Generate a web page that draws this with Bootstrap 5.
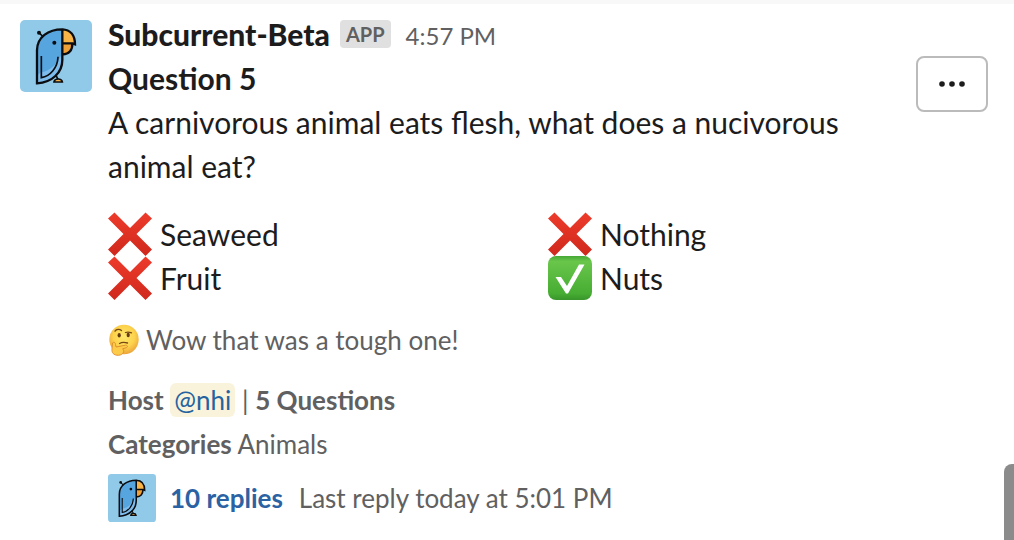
<!DOCTYPE html>
<html lang="en">
<head>
<meta charset="utf-8">
<meta name="viewport" content="width=device-width, initial-scale=1">
<title>Subcurrent-Beta</title>
<link href="https://cdn.jsdelivr.net/npm/bootstrap@5.3.0/dist/css/bootstrap.min.css" rel="stylesheet">
<style>
body { font-family: Lato, "Liberation Sans", sans-serif; font-size: 30px; line-height: 44px; color: #1d1c1d; background: #fff; overflow: hidden; }
.divider-strip { height: 4px; background: #f8f8f8; }
.message { padding: 8px 26px 16px 20px; }
.avatar { width: 72px; height: 72px; margin-top: 8px; }
.sender { font-weight: 900; }
.app-tag { font-size: 20px; line-height: 28px; font-weight: 700; color: #616061; background: #e0e0e0; border-radius: 4px; padding: 0 6px; margin: 0 15px 0 10px; }
.time { font-size: 24px; line-height: 40px; padding-top: 4px; }
.muted { color: #616061; }
.more { width: 72px; height: 56px; border: 2px solid #bbb; border-radius: 8px; background: #fff; }
.question-text { max-width: 760px; }
.emoji { width: 44px; height: 44px; }
.context { font-size: 26px; line-height: 36px; }
.reaction { margin-top: 22px; gap: 6px; }
.face { width: 32px; height: 32px; }
.mention { color: #2562a0; background: #faf3dc; border-radius: 6px; padding: 1px 4px; text-decoration: none; }
.thread { margin-top: 12px; }
.thread-avatar { width: 48px; height: 48px; margin-right: 14px; }
.replies { color: #2b62a3; font-weight: 700; text-decoration: none; }
.scroll-thumb { top: 464px; bottom: 0; width: 10px; background: #8b8b8b; border-radius: 8px 0 0 0; }
</style>
<script src="https://cdn.jsdelivr.net/npm/bootstrap@5.3.0/dist/js/bootstrap.bundle.min.js"></script>
</head>
<body>
<svg width="0" height="0" class="position-absolute" aria-hidden="true">
  <defs>
    <linearGradient id="red" x1="0" y1="0" x2="0" y2="1"><stop offset="0" stop-color="#ed3b2b"/><stop offset="1" stop-color="#cf281c"/></linearGradient>
    <linearGradient id="green" x1="0" y1="0" x2="0" y2="1"><stop offset="0" stop-color="#46a735"/><stop offset=".12" stop-color="#69c64b"/><stop offset=".85" stop-color="#47ad33"/><stop offset="1" stop-color="#38952a"/></linearGradient>
    <radialGradient id="skin" cx=".5" cy=".4" r=".6"><stop offset="0" stop-color="#ffe76a"/><stop offset=".6" stop-color="#fdd34c"/><stop offset="1" stop-color="#eca33b"/></radialGradient>
    <symbol id="bird" viewBox="0 0 216 216">
      <rect width="216" height="216" rx="15" fill="#91cae9"/>
      <path d="M57 38L70 51" stroke="#0b0d10" stroke-width="5"/>
      <circle cx="57" cy="38" r="6" fill="#0b0d10"/>
      <path d="M51 190V91C51 52 85 28 127 28V119C127 158 97 187 51 190Z" fill="#7dbcec"/>
      <path d="M51 166V91C51 52 85 28 127 28V96C116 132 88 154 63 157Z" fill="#56a5df"/>
      <path d="M127 28C151 29 165 45 165 73L158 70H127Z" fill="#f9b448"/>
      <path d="M127 70H157C158 91 146 104 127 103Z" fill="#efa036"/>
      <path d="M51 190V91C51 52 85 28 127 28V119C127 158 97 187 51 190ZM127 28C151 29 165 45 165 73L158 70H127M157 70C158 91 146 104 127 103" fill="none" stroke="#0b0d10" stroke-width="7"/>
      <path d="M64 108V173C91 168 113 143 114 110" fill="none" stroke="#0b0d10" stroke-width="5"/>
      <circle cx="103" cy="68" r="6" fill="#0b0d10"/>
      <path d="M107 164L114 178" stroke="#0b0d10" stroke-width="5"/>
      <path d="M102 186C104 174 125 174 127 186Z" fill="#f9b448" stroke="#0b0d10" stroke-width="5"/>
    </symbol>
    <symbol id="cross" viewBox="0 0 44 44"><path d="M0 6.500L6.500 .5L22 16L37.500 .5L44 6.500L28.500 22L44 37.500L37.500 44L22 28.500L6.500 44L0 37.500L15.500 22Z" fill="url(#red)"/></symbol>
    <symbol id="check" viewBox="0 0 44 44"><rect width="44" height="44" rx="8" fill="url(#green)"/><path d="M7.500 21H13L19 30L31 8.500H36.500L20 37.500H18Z" fill="#fff"/></symbol>
    <symbol id="think" viewBox="0 0 32 32">
      <circle cx="16" cy="15.500" r="14.700" fill="url(#skin)"/>
      <ellipse cx="11.200" cy="11.200" rx="1.600" ry="2.300" fill="#673b13"/><ellipse cx="20.200" cy="11" rx="1.600" ry="2.300" fill="#673b13"/>
      <path d="M7 7.200C8.500 5 11.500 5 13.500 6.500M17.500 8.500C19.500 7.800 21.500 8 23.500 8.800M11.500 19.500C14 18 17 18.300 19.500 19" fill="none" stroke="#754816" stroke-width="1.300" stroke-linecap="round"/>
      <path d="M4.500 19C6 17.500 7.500 18.500 7.500 20.500L8 23L17.500 21.200C20 21 20 23.300 18 23.800L14.500 24.800C17 26.500 15.500 31 10.500 31.300C5.500 31.500 3.500 28.500 4 25Z" fill="#fccb49" stroke="#dc8b2b" stroke-width=".9"/>
    </symbol>
  </defs>
</svg>
<div class="divider-strip"></div>
<main class="message d-flex gap-3">
  <svg class="avatar flex-shrink-0" role="img" aria-label="Subcurrent-Beta"><use href="#bird"/></svg>
  <article class="flex-grow-1">
    <header class="d-flex align-items-center">
      <span class="sender">Subcurrent-Beta</span><span class="app-tag">APP</span><time class="time muted">4:57 PM</time>
    </header>
    <section class="d-flex justify-content-between align-items-start">
      <div class="question-text"><strong>Question 5</strong><br>A carnivorous animal eats flesh, what does a nucivorous animal eat?</div>
      <button type="button" class="more d-flex align-items-center justify-content-center flex-shrink-0 p-0" aria-label="More actions">
        <svg width="26" height="6" viewBox="0 0 26 6" fill="#1d1c1d"><circle cx="3" cy="3" r="2.800"/><circle cx="13" cy="3" r="2.800"/><circle cx="23" cy="3" r="2.800"/></svg>
      </button>
    </section>
    <section class="row g-0 mt-4">
      <div class="col-6 d-flex gap-2"><svg class="emoji"><use href="#cross"/></svg><span>Seaweed</span></div>
      <div class="col-6 d-flex gap-2"><svg class="emoji"><use href="#cross"/></svg><span>Nothing</span></div>
      <div class="col-6 d-flex gap-2"><svg class="emoji"><use href="#cross"/></svg><span>Fruit</span></div>
      <div class="col-6 d-flex gap-2"><svg class="emoji"><use href="#check"/></svg><span>Nuts</span></div>
    </section>
    <div class="context reaction muted d-flex align-items-center"><svg class="face"><use href="#think"/></svg><span>Wow that was a tough one!</span></div>
    <div class="context muted mt-4"><strong>Host</strong> <a href="#" class="mention">@nhi</a> | <strong>5 Questions</strong></div>
    <div class="context muted mt-2"><strong>Categories</strong> Animals</div>
    <footer class="context thread d-flex align-items-center">
      <svg class="thread-avatar"><use href="#bird"/></svg><a href="#" class="replies me-3">10 replies</a><span class="muted">Last reply today at 5:01 PM</span>
    </footer>
  </article>
</main>
<div class="scroll-thumb position-fixed end-0"></div>
</body>
</html>
